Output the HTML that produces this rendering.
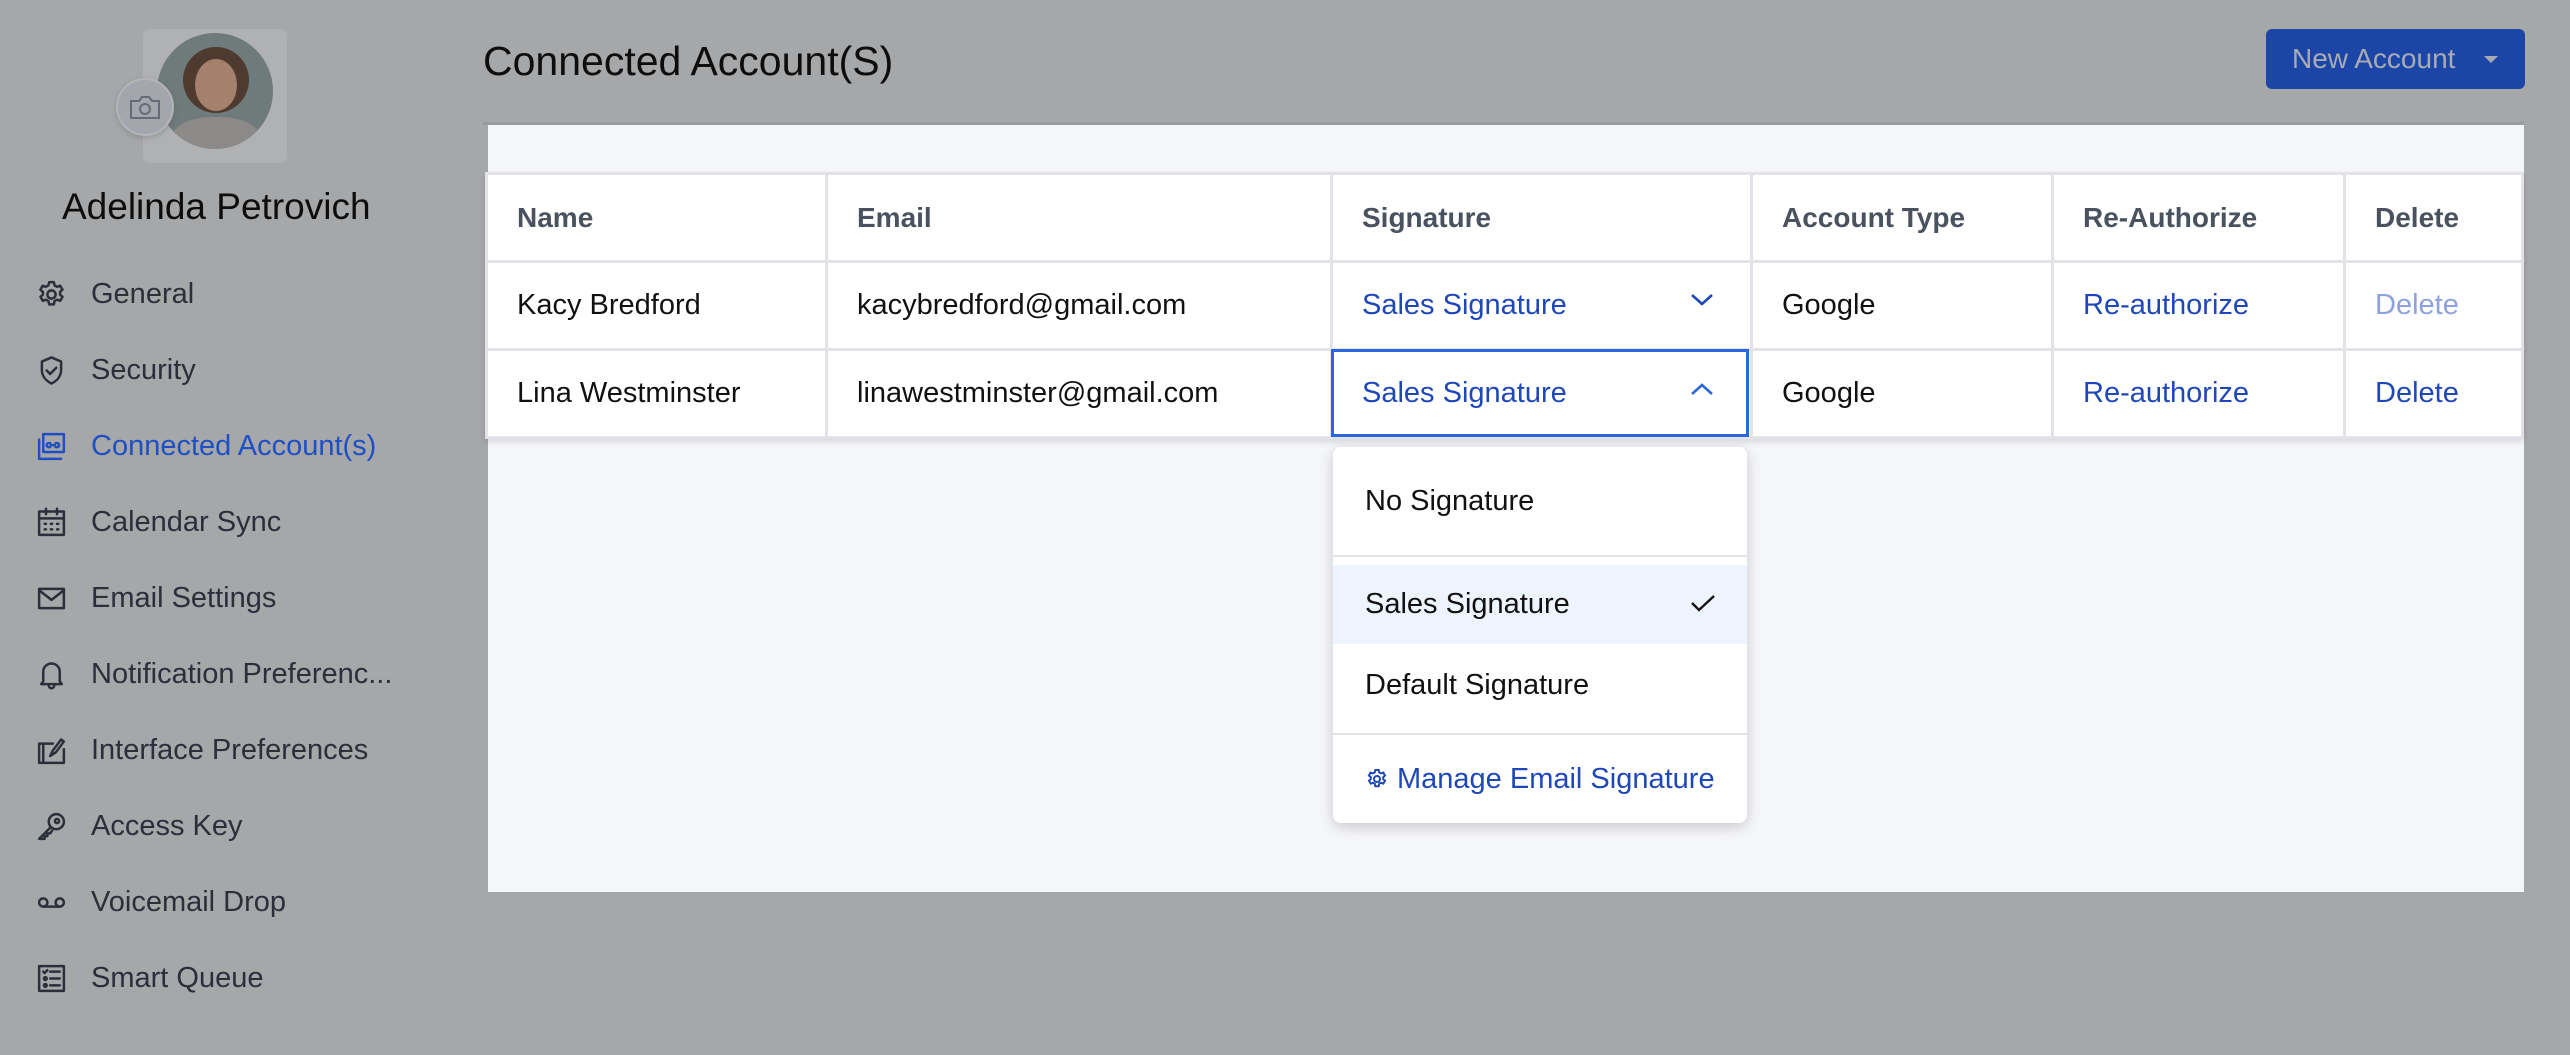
<!DOCTYPE html>
<html><head><meta charset="utf-8"><style>
*{margin:0;padding:0;box-sizing:border-box}
body{width:2570px;height:1055px;background:#a6a7a9;font-family:"Liberation Sans",sans-serif;position:relative;overflow:hidden}
.a{position:absolute}
.nav{position:absolute;left:35px;display:flex;align-items:center;font-size:29px;color:#2a2f3a;height:40px}
.nav svg{width:33px;height:33px;margin-right:23px;fill:none;stroke:#2a2f3a;stroke-width:1.8;stroke-linecap:round;stroke-linejoin:round}
.nav.act{color:#1f4fc4}.nav.act svg{stroke:#1f4fc4}
.panel{position:absolute;left:488px;top:125px;width:2036px;height:767px;background:#f5f6fa}
table{position:absolute;left:485px;top:172px;border-collapse:collapse;background:#fff;box-shadow:0 3px 6px rgba(0,0,0,.12)}
td{border:3px solid #e2e3e8;font-size:29px;color:#111;padding:0 0 0 29px;height:88px;vertical-align:middle;white-space:nowrap}
tr:first-child td{font-weight:bold;color:#4a5260;font-size:28px}
.l{color:#1f47b8}
.dd{position:absolute;left:1333px;top:447px;width:414px;height:376px;background:#fff;border-radius:8px;box-shadow:0 4px 14px rgba(0,0,0,.18)}
.it{position:absolute;left:0;width:414px;font-size:29px;color:#111;padding-left:32px;display:flex;align-items:center}
</style></head><body>
<div class="a" style="left:143px;top:29px;width:144px;height:134px;background:#b0b1b3;border-radius:6px"></div>
<div class="a" style="left:157px;top:33px;width:116px;height:116px;border-radius:50%;background:#6f7b7a;overflow:hidden">
<div class="a" style="left:14px;top:84px;width:90px;height:50px;border-radius:45% 45% 0 0;background:#8c8a88"></div>
<div class="a" style="left:26px;top:14px;width:66px;height:66px;border-radius:50%;background:#4e3a2e"></div>
<div class="a" style="left:38px;top:26px;width:42px;height:52px;border-radius:50%;background:#a5806c"></div></div>
<div class="a" style="left:116px;top:78px;width:58px;height:58px;border-radius:50%;background:#a4a6ad;border:2px solid #b4b5b8;box-shadow:0 2px 6px rgba(0,0,0,.15)"></div>
<svg class="a" style="left:129px;top:94px" width="32" height="26" viewBox="0 0 32 26" fill="none" stroke="#666b78" stroke-width="2"><path d="M2 7h8l3-4h7l3 4h7v17H2z"/><circle cx="16" cy="15" r="5"/></svg>
<div class="a" style="left:62px;top:186px;font-size:37px;color:#0d0d0d">Adelinda Petrovich</div>

<div class="nav" style="top:274px"><svg viewBox="0 0 24 24"><circle cx="12" cy="12" r="3"/><path d="M10.3 3h3.4l.5 2.4 1.8 1 2.3-.8 1.7 2.9-1.8 1.6v2l1.8 1.6-1.7 2.9-2.3-.8-1.8 1-.5 2.4h-3.4l-.5-2.4-1.8-1-2.3.8-1.7-2.9 1.8-1.6v-2L3.9 8.5l1.7-2.9 2.3.8 1.8-1z"/></svg>General</div>
<div class="nav" style="top:350px"><svg viewBox="0 0 24 24"><path d="M12 2.5l7 3v6c0 4.5-3 8-7 10-4-2-7-5.5-7-10v-6z"/><path d="M8.5 12l2.5 2.5 4.5-4.5"/></svg>Security</div>
<div class="nav act" style="top:426px"><svg viewBox="0 0 24 24"><path d="M3 7v14h16"/><rect x="6" y="3" width="15" height="13"/><path d="M11 9.5h-1a1.5 1.5 0 000 3h1M15 9.5h1a1.5 1.5 0 010 3h-1M11.5 11h3"/></svg>Connected Account(s)</div>
<div class="nav" style="top:502px"><svg viewBox="0 0 24 24"><rect x="3" y="4" width="18" height="17"/><path d="M3 9h18M8 2v4M16 2v4M7 13h1M11.5 13h1M16 13h1M7 17h1M11.5 17h1M16 17h1"/></svg>Calendar Sync</div>
<div class="nav" style="top:578px"><svg viewBox="0 0 24 24"><rect x="3" y="5" width="18" height="14"/><path d="M3 6l9 7 9-7"/></svg>Email Settings</div>
<div class="nav" style="top:654px"><svg viewBox="0 0 24 24"><path d="M6 17V10a6 6 0 0112 0v7l1.5 2h-15zM10 20a2 2 0 004 0"/></svg>Notification Preferenc...</div>
<div class="nav" style="top:730px"><svg viewBox="0 0 24 24"><path d="M3 7h10M3 7v14h18V11M6 7v14M11 16l2-4 6-8 2 1.5-6 8z"/></svg>Interface Preferences</div>
<div class="nav" style="top:806px"><svg viewBox="0 0 24 24"><circle cx="15.5" cy="8.5" r="5.5"/><circle cx="16" cy="8" r="1.5"/><path d="M11.5 12.5L3 21h4v-2h2v-2h2l1.5-2"/></svg>Access Key</div>
<div class="nav" style="top:882px"><svg viewBox="0 0 24 24"><circle cx="6" cy="12" r="3"/><circle cx="18" cy="12" r="3"/><path d="M6 15h12"/></svg>Voicemail Drop</div>
<div class="nav" style="top:958px"><svg viewBox="0 0 24 24"><rect x="3" y="3" width="18" height="18"/><path d="M6 7l1 1 2-2M11 7h7M11 12h7M11 17h7"/><circle cx="7.5" cy="12" r="1"/><circle cx="7.5" cy="17" r="1"/></svg>Smart Queue</div>

<div class="a" style="left:483px;top:38px;font-size:41px;color:#0d0d0d">Connected Account(S)</div>
<div class="a" style="left:2266px;top:29px;width:259px;height:60px;background:#1b46a7;border-radius:6px;color:#a9abb2;font-size:28px;line-height:60px;padding-left:26px">New Account<span style="position:absolute;left:218px;top:27px;border:7px solid transparent;border-top:7px solid #a9abb2"></span></div>
<div class="a" style="left:483px;top:122px;width:2041px;height:3px;background:#9a9b9e"></div>

<div class="panel"></div>
<table>
<tr><td style="width:340px">Name</td><td style="width:505px">Email</td><td style="width:420px">Signature</td><td style="width:301px">Account Type</td><td style="width:292px">Re-Authorize</td><td style="width:178px">Delete</td></tr>
<tr><td>Kacy Bredford</td><td>kacybredford@gmail.com</td><td class="l">Sales Signature</td><td>Google</td><td class="l">Re-authorize</td><td style="color:#8fa2de">Delete</td></tr>
<tr><td>Lina Westminster</td><td>linawestminster@gmail.com</td><td class="l">Sales Signature</td><td>Google</td><td class="l">Re-authorize</td><td class="l">Delete</td></tr>
</table>
<div class="a" style="left:1331px;top:349px;width:418px;height:88px;border:3px solid #2c65dc"></div>
<svg class="a" style="left:1690px;top:292px" width="24" height="16" viewBox="0 0 24 16" fill="none" stroke="#1f47b8" stroke-width="2.6"><path d="M2 3l10 9 10-9"/></svg>
<svg class="a" style="left:1690px;top:381px" width="24" height="16" viewBox="0 0 24 16" fill="none" stroke="#2c65dc" stroke-width="2.6"><path d="M2 13l10-9 10 9"/></svg>

<div class="dd">
<div class="it" style="top:24px;height:60px">No Signature</div>
<div class="a" style="left:0;top:108px;width:414px;height:2px;background:#e2e3e8"></div>
<div class="it" style="top:118px;height:79px;background:#eef4fe">Sales Signature<svg style="position:absolute;left:357px;top:28px" width="26" height="20" viewBox="0 0 26 20" fill="none" stroke="#111" stroke-width="2.4"><path d="M2 10l7 7L24 3"/></svg></div>
<div class="it" style="top:208px;height:60px">Default Signature</div>
<div class="a" style="left:0;top:286px;width:414px;height:2px;background:#e2e3e8"></div>
<div class="it" style="top:302px;height:60px;color:#1f47b8"><svg width="24" height="24" viewBox="0 0 24 24" fill="none" stroke="#1f47b8" stroke-width="2" style="margin-right:8px"><circle cx="12" cy="12" r="3"/><path d="M10.3 3h3.4l.5 2.4 1.8 1 2.3-.8 1.7 2.9-1.8 1.6v2l1.8 1.6-1.7 2.9-2.3-.8-1.8 1-.5 2.4h-3.4l-.5-2.4-1.8-1-2.3.8-1.7-2.9 1.8-1.6v-2L3.9 8.5l1.7-2.9 2.3.8 1.8-1z"/></svg>Manage Email Signature</div>
</div>
</body></html>
